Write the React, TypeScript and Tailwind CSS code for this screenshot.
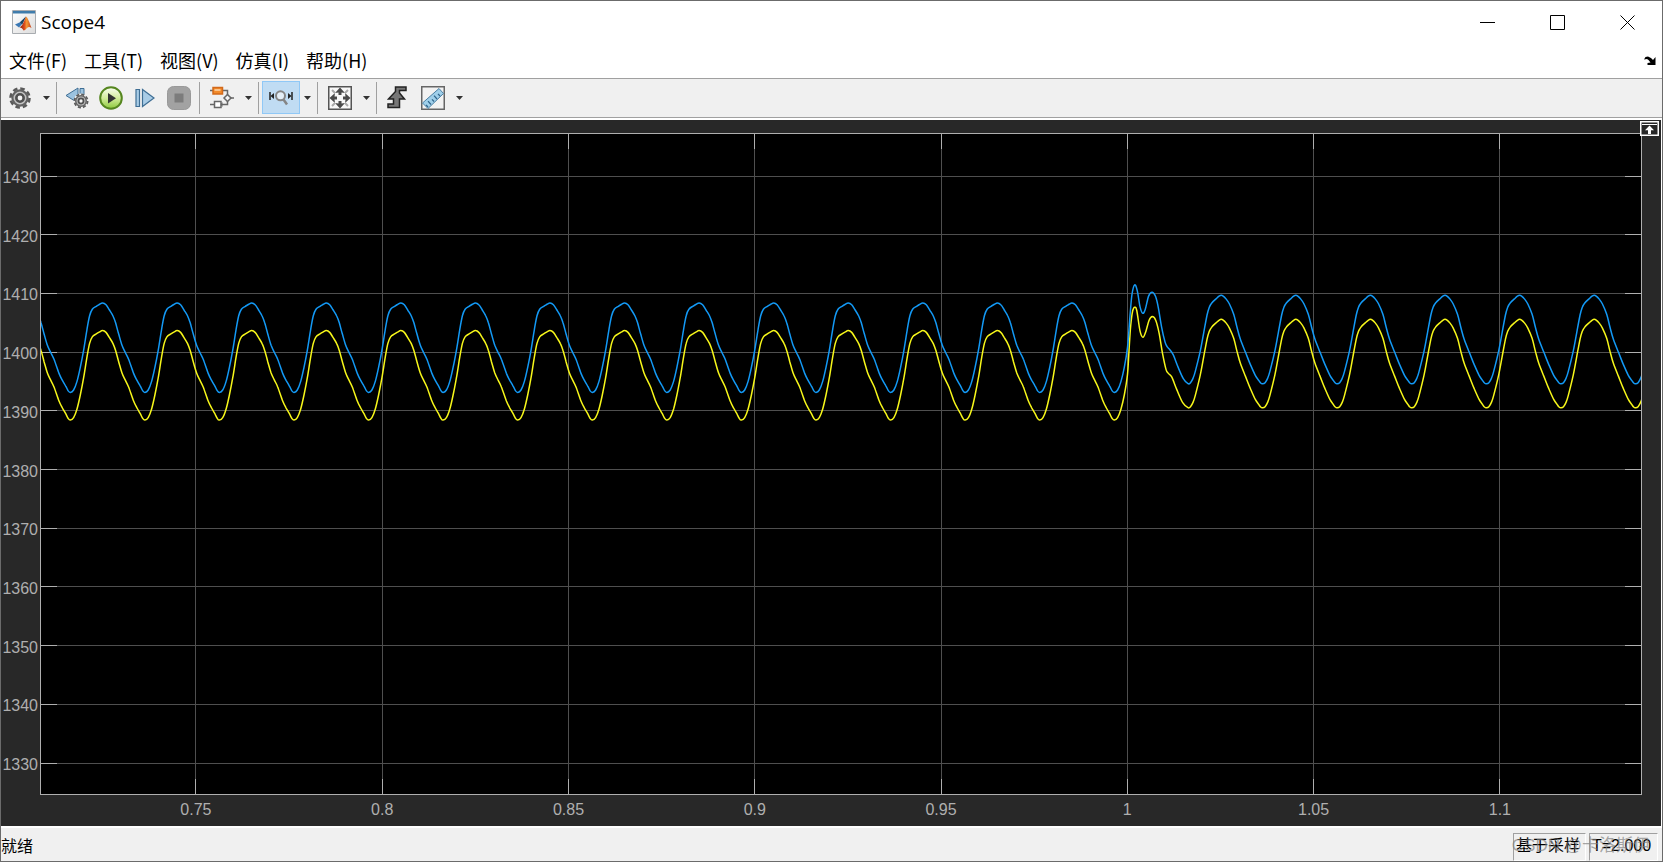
import React from 'react';

type Point = [number, number];

const VIEW_W = 1600;
const VIEW_H = 659;

const X_RANGE = { min: 0.70842, max: 1.13788 };
const Y_RANGE = { min: 1324.72, max: 1437.16 };

const xTicks = [0.75, 0.8, 0.85, 0.9, 0.95, 1, 1.05, 1.1];
const yTicks = [1430, 1420, 1410, 1400, 1390, 1380, 1370, 1360, 1350, 1340, 1330];

const menus = ['文件(F)', '工具(T)', '视图(V)', '仿真(I)', '帮助(H)'];

// One ripple period before the load step, starting at the trough
const rippleBefore: Point[] = [
  [0, 258], [3.3, 255.6], [6.7, 247], [10, 233], [13.3, 216], [16.7, 195], [19.3, 181.5], [22, 175],
  [26, 172], [29.3, 170], [32.3, 168.7], [35.7, 170.5], [39, 175.5], [42.7, 181.7], [45.3, 188.5],
  [48.3, 199.5], [51.7, 211], [55, 218.2], [58.3, 225], [63.3, 239], [66.7, 246], [70, 251.7], [72.5, 256.5],
];

// Same period after the load step
const rippleAfter: Point[] = [
  [0, 249.3], [2.5, 248.3], [5, 244], [7.3, 237], [12.3, 216.5], [15.7, 198.5], [19, 181], [21.3, 173], [24, 168.5],
  [28, 164.6], [31, 162], [33.2, 161], [35.2, 161.8], [38, 164.6], [41.3, 169.5], [45.7, 180], [49, 193],
  [52.3, 204.7], [57.3, 217.5], [62.3, 230], [67.3, 241], [70.7, 246], [72.7, 248.6],
];

const blueStep: Point[] = [
  [1086.5, 213], [1089, 181.5], [1091, 160], [1093.7, 150.6], [1096.3, 156.6], [1099, 172.3], [1101.7, 179],
  [1104.3, 175], [1107.7, 161.6], [1111.3, 158], [1114.7, 162.6], [1117.3, 173.3], [1120.7, 193.3],
  [1124, 207.6], [1126.3, 212.6], [1129, 215.6], [1132.3, 220.6], [1137.3, 233.3], [1142.3, 244.3],
];

const yellowStep: Point[] = [
  [1086.5, 240], [1087.7, 221.5], [1089.7, 191.5], [1091.7, 176.5], [1093.7, 173], [1095.7, 176],
  [1099, 196.6], [1102, 203], [1105, 196.6], [1108, 186.3], [1111.3, 182.3], [1114.7, 186], [1118, 198.3],
  [1121.7, 220], [1125, 235], [1127.3, 239], [1130.7, 242.6], [1135.7, 255], [1141.7, 268.3],
];

function buildTrace(before: number, step: Point[], after: number): Point[] {
  const points: Point[] = [];
  for (let i = -1; i < 15; i++) {
    rippleBefore.forEach(([x, y]) => points.push([29.3 + i * 74.57 + x, y + before]));
  }
  const head = points.filter(([x]) => x < 1084);
  const tail: Point[] = [];
  for (let i = 0; i < 7; i++) {
    rippleAfter.forEach(([x, y]) => tail.push([1147 + i * 74.6 + x, y + after]));
  }
  return [...head, ...step, ...tail];
}

function smoothPath(points: Point[]) {
  let d = `M${points[0][0]} ${points[0][1]}`;
  for (let i = 0; i < points.length - 1; i++) {
    const p0 = points[i - 1] ?? points[i];
    const p1 = points[i];
    const p2 = points[i + 1];
    const p3 = points[i + 2] ?? p2;
    const c1 = [p1[0] + (p2[0] - p0[0]) / 6, p1[1] + (p2[1] - p0[1]) / 6];
    const c2 = [p2[0] - (p3[0] - p1[0]) / 6, p2[1] - (p3[1] - p1[1]) / 6];
    d += `C${c1[0].toFixed(1)} ${c1[1].toFixed(1)} ${c2[0].toFixed(1)} ${c2[1].toFixed(1)} ${p2[0].toFixed(1)} ${p2[1].toFixed(1)}`;
  }
  return d;
}

const traces = [
  { color: '#f7f71a', d: smoothPath(buildTrace(27.6, yellowStep, 24)) },
  { color: '#1399f5', d: smoothPath(buildTrace(0, blueStep, 0)) },
];

const xPos = (v: number) => `${(((v - X_RANGE.min) / (X_RANGE.max - X_RANGE.min)) * 100).toFixed(3)}%`;
const yPos = (v: number) => `${(((Y_RANGE.max - v) / (Y_RANGE.max - Y_RANGE.min)) * 100).toFixed(3)}%`;

export default function App() {
  return (
    <div className="flex h-screen flex-col border border-[#6b6b6b] bg-[#f0f0f0] font-['Noto_Sans','Noto_Sans_CJK_SC',sans-serif] text-black">
      <TitleBar />
      <MenuBar />
      <Toolbar />
      <ScopePlot />
      <StatusBar />
    </div>
  );
}

function TitleBar() {
  return (
    <header className="flex h-[42px] shrink-0 items-center justify-between bg-white pl-[11px]">
      <div className="flex items-center gap-[5px]">
        <MatlabIcon />
        <h1 className="font-['Open_Sans','Noto_Sans',sans-serif] text-[19px] leading-6">Scope4</h1>
      </div>
      <div className="flex h-full">
        <WindowButton label="Minimize"><path d="M0 7.5h15" /></WindowButton>
        <WindowButton label="Maximize"><path d="M.5.5h14v14H.5z" /></WindowButton>
        <WindowButton label="Close"><path d="M.5.5l14 14M14.5.5l-14 14" /></WindowButton>
      </div>
    </header>
  );
}

function WindowButton({ label, children }: { label: string; children: React.ReactNode }) {
  return (
    <button aria-label={label} className="flex w-[70px] items-center justify-center">
      <svg width="15" height="15" viewBox="0 0 15 15" fill="none" stroke="#000">{children}</svg>
    </button>
  );
}

function MenuBar() {
  return (
    <nav className="flex h-[35px] shrink-0 items-center justify-between bg-white pr-[6px] pb-px pl-2">
      <div className="flex gap-[17px]">
        {menus.map((menu) => (
          <button key={menu} className="font-['Noto_Sans_CJK_SC',sans-serif] text-[18px] leading-6">{menu}</button>
        ))}
      </div>
      <button aria-label="Dock">
        <svg width="12" height="9" viewBox="0 0 12 9">
          <path d="M0 3.500L1.500 1 4 .5l3 1.500 2 2L11.500 1v8H3.500V7l3-.500L4.500 4 3 3z" fill="#000" />
        </svg>
      </button>
    </nav>
  );
}

function Toolbar() {
  return (
    <div className="flex h-10 shrink-0 items-center border-t border-b border-[#a0a0a0] bg-[#f0f0f0] pb-px">
      <ToolButton label="Configuration"><GearIcon /></ToolButton>
      <DropArrow label="Configuration options" />
      <Separator />
      <ToolButton label="Step back" narrow><StepBackIcon /></ToolButton>
      <ToolButton label="Run" narrow><RunIcon /></ToolButton>
      <ToolButton label="Step forward" narrow><StepForwardIcon /></ToolButton>
      <ToolButton label="Stop" narrow><StopIcon /></ToolButton>
      <Separator />
      <ToolButton label="Highlight block"><BlocksIcon /></ToolButton>
      <DropArrow label="Highlight options" />
      <Separator />
      <ToolButton label="Zoom X" active><ZoomXIcon /></ToolButton>
      <DropArrow label="Zoom options" />
      <Separator />
      <ToolButton label="Scale axes"><FitIcon /></ToolButton>
      <DropArrow label="Scale options" />
      <Separator />
      <ToolButton label="Triggers" narrow><TriggerIcon /></ToolButton>
      <ToolButton label="Measurements"><RulerIcon /></ToolButton>
      <DropArrow label="Measurement options" />
    </div>
  );
}

interface ToolButtonProps {
  label: string;
  narrow?: boolean;
  active?: boolean;
  children: React.ReactNode;
}

function ToolButton({ label, narrow, active, children }: ToolButtonProps) {
  return (
    <button
      aria-label={label}
      className={`flex h-[33px] items-center justify-center border ${narrow ? 'w-[34px]' : 'w-[38px]'} ${active ? 'border-[#90c8f6] bg-[#c0dcf3]' : 'border-transparent'}`}
    >
      {children}
    </button>
  );
}

function DropArrow({ label }: { label: string }) {
  return (
    <button aria-label={label} className="flex h-8 w-[14px] items-center justify-center">
      <svg width="7" height="4" viewBox="0 0 7 4"><path d="M0 0h7L3.500 4z" fill="#333" /></svg>
    </button>
  );
}

function Separator() {
  return <div className="mx-[3px] h-8 w-px bg-[#a0a0a0]" />;
}

function ScopePlot() {
  return (
    <main className="relative flex min-h-0 flex-1 border-t-2 border-r border-white bg-[#282828] pt-[13px] pr-[19px] pb-[31px] pl-[39px]">
      <div className="min-w-0 flex-1 border border-[#afafaf] bg-black">
        <svg className="block h-full w-full overflow-visible font-['Liberation_Sans',sans-serif] text-[16px]">
          <g stroke="#4f4f4f" shapeRendering="crispEdges">
            {xTicks.map((x) => <line key={x} x1={xPos(x)} x2={xPos(x)} y1="0" y2="100%" />)}
            {yTicks.map((y) => <line key={y} x1="0" x2="100%" y1={yPos(y)} y2={yPos(y)} />)}
          </g>
          <g stroke="#afafaf" shapeRendering="crispEdges">
            {xTicks.map((x) => <line key={x} x1={xPos(x)} x2={xPos(x)} y1="0" y2="15" />)}
            {yTicks.map((y) => <line key={y} x1="0" x2="16" y1={yPos(y)} y2={yPos(y)} />)}
            <svg y="100%" overflow="visible">
              {xTicks.map((x) => <line key={x} x1={xPos(x)} x2={xPos(x)} y1="-15" y2="0" />)}
            </svg>
            <svg x="100%" overflow="visible">
              {yTicks.map((y) => <line key={y} x1="-16" x2="0" y1={yPos(y)} y2={yPos(y)} />)}
            </svg>
          </g>
          <g fill="#afafaf">
            {yTicks.map((y) => <text key={y} x="-3" y={yPos(y)} dy="7" textAnchor="end">{y}</text>)}
            <svg y="100%" overflow="visible">
              {xTicks.map((x) => <text key={x} x={xPos(x)} y="21" textAnchor="middle">{x}</text>)}
            </svg>
          </g>
          <svg width="100%" height="100%" viewBox={`0 0 ${VIEW_W} ${VIEW_H}`} preserveAspectRatio="none" overflow="hidden">
            {traces.map((t) => (
              <path key={t.color} d={t.d} fill="none" stroke={t.color} strokeWidth="1.5" strokeLinejoin="round" vectorEffect="non-scaling-stroke" />
            ))}
          </svg>
        </svg>
      </div>
      <button aria-label="Maximize axes" className="absolute top-px right-0.5">
        <svg width="19" height="15" viewBox="0 0 19 15">
          <path d="M.75.75h17.500v13.500H.75z" fill="#282828" stroke="#fff" strokeWidth="1.500" />
          <path d="M2 3.500h15" stroke="#fff" />
          <path d="M9.500 4.500L14 9.200h-3V13H8V9.200H5z" fill="#fff" />
        </svg>
      </button>
    </main>
  );
}

function StatusBar() {
  return (
    <footer className="relative flex h-[35px] shrink-0 items-center justify-between border-t-2 border-white pt-1 pr-1 font-['Liberation_Sans','Noto_Sans_CJK_SC',sans-serif] text-[16px] leading-6">
      <span>就绪</span>
      <div className="flex gap-[3px]">
        <span className="h-7 w-[73px] border border-t-[#a0a0a0] border-r-white border-b-white border-l-[#a0a0a0] pl-0.5">基于采样</span>
        <span className="h-7 w-[69px] border border-t-[#a0a0a0] border-r-white border-b-white border-l-[#a0a0a0] pl-0.5">T=2.000</span>
      </div>
      <span className="pointer-events-none absolute top-1.5 right-3 text-[17px] whitespace-nowrap text-[#808080]/70">CSDN @卡洛斯伊</span>
    </footer>
  );
}

function MatlabIcon() {
  return (
    <svg width="24" height="24" viewBox="0 0 24 24">
      <defs>
        <linearGradient id="frame" x1="0" y1="0" x2="1" y2="1">
          <stop offset="0" stopColor="#fff" />
          <stop offset="1" stopColor="#dcdcdc" />
        </linearGradient>
        <linearGradient id="peak" x1="0" y1="0" x2="1" y2="0">
          <stop offset="0" stopColor="#7a1f10" />
          <stop offset=".4" stopColor="#d9481c" />
          <stop offset=".6" stopColor="#f59a35" />
          <stop offset="1" stopColor="#c23a17" />
        </linearGradient>
      </defs>
      <path d="M.5.5h23v23H.5z" fill="url(#frame)" stroke="#a8acb0" />
      <path d="M1 1h22v2.500H1z" fill="#3f7cab" />
      <path d="M3 14.500l5-2.200 3.200-3L14 6.500l-3.500 7L7 17.500z" fill="#3b78b4" />
      <path d="M8 12.300l3.200-3L14 6.500l-3.800 8z" fill="#1d4560" />
      <path d="M14 6.500c1.500.5 3.500 6 5.500 11.500-2-1.500-3-1.500-4.500 0-1.300 1.200-2 2.500-3.500 2.500-1-1.500-2-3-4-3.200 3-1 4.500-6 6.500-10.800z" fill="url(#peak)" />
    </svg>
  );
}

function Cog({ cx, cy, r }: { cx: number; cy: number; r: number }) {
  return (
    <g>
      <circle cx={cx} cy={cy} r={r * 0.88} fill="none" stroke="#5a5a5a" strokeWidth={r * 0.24} strokeDasharray={`${r * 0.42} ${r * 0.271}`} />
      <circle cx={cx} cy={cy} r={r * 0.7} fill="#c4c4c4" stroke="#636363" strokeWidth={r * 0.2} />
      <circle cx={cx} cy={cy} r={r * 0.34} fill="#f4f4f4" stroke="#505050" strokeWidth={r * 0.24} />
    </g>
  );
}

function GearIcon() {
  return (
    <svg width="22" height="22" viewBox="0 0 22 22"><Cog cx={11} cy={11} r={10.8} /></svg>
  );
}

function StepBackIcon() {
  return (
    <svg width="24" height="24" viewBox="0 0 24 24">
      <path d="M1 9.500L13 2v15z" fill="#9cc3e0" stroke="#3f6e94" />
      <path d="M15 2.500h4v13h-4z" fill="#9cc3e0" stroke="#3f6e94" />
      <circle cx="16" cy="15" r="7.500" fill="#f0f0f0" />
      <Cog cx={16} cy={15} r={7.5} />
    </svg>
  );
}

function RunIcon() {
  return (
    <svg width="24" height="24" viewBox="0 0 24 24">
      <defs>
        <linearGradient id="run" x1="0" y1="0" x2="0" y2="1">
          <stop offset="0" stopColor="#fbfef4" />
          <stop offset=".5" stopColor="#d3ec9c" />
          <stop offset="1" stopColor="#8cc83c" />
        </linearGradient>
      </defs>
      <circle cx="12" cy="12" r="10.800" fill="url(#run)" stroke="#55861f" strokeWidth="2" />
      <path d="M9 7v10.500l8-5.300z" fill="#333" />
    </svg>
  );
}

function StepForwardIcon() {
  return (
    <svg width="20" height="20" viewBox="0 0 20 20" fill="#a9cce6" stroke="#3f6e94" strokeWidth="1.200">
      <path d="M1 1.500h3.500v17H1z" />
      <path d="M7.500 1.500v17l11.500-8.500z" />
    </svg>
  );
}

function StopIcon() {
  return (
    <svg width="24" height="24" viewBox="0 0 24 24">
      <rect x=".5" y=".5" width="23" height="23" rx="6" fill="#a2a2a2" stroke="#999" />
      <path d="M7.500 7.500h9v9h-9z" fill="#7c7c7c" />
    </svg>
  );
}

function BlocksIcon() {
  return (
    <svg width="24" height="23" viewBox="0 0 24 23" fill="none" stroke="#666" strokeWidth="1.500">
      <path d="M0 4.500h3M12.500 4.500h5v4.500M21 12h3M17.500 15v3.500h-7M0 18.500h4" />
      <path d="M3 1.500h9.500V8H3z" fill="#f28a2a" stroke="#d2691a" />
      <path d="M4.500 3h6v2h-6z" fill="#fbc48b" stroke="none" />
      <path d="M4.500 15.500h6.500v6H4.500z" fill="#fff" />
      <path d="M17.500 8.500L21 12l-3.500 3.500L14 12z" fill="#f4f4f4" />
      <path d="M12.500 16v5l-2-2.500z" fill="#666" stroke="none" />
    </svg>
  );
}

function ZoomXIcon() {
  return (
    <svg width="24" height="16" viewBox="0 0 24 16">
      <path d="M1 2v8M23 2v8" stroke="#222" strokeWidth="1.500" />
      <path d="M1.500 6l3.500-3v6zM22.500 6L19 3v6z" fill="#222" />
      <circle cx="11.500" cy="5.800" r="4.500" fill="#e4eef6" stroke="#858585" strokeWidth="2" />
      <path d="M14.500 9.500l3.500 5" stroke="#858585" strokeWidth="2.500" />
    </svg>
  );
}

function FitIcon() {
  return (
    <svg width="24" height="24" viewBox="0 0 24 24">
      <path d="M.75.75h22.500v22.500H.75z" fill="#f8f8f8" stroke="#555" strokeWidth="1.500" />
      <path d="M12 1.500l5 5.500-3.500-.5v2.500h-3V6.500L7 7zM12 22.500l5-5.500-3.500.5v-2.500h-3v2.500L7 17zM1.500 12L7 7l-.5 3.500H9v3H6.500L7 17zM22.500 12L17 7l.5 3.500H15v3h2.500L17 17z" fill="#4a4a4a" />
      <path d="M4 4l3 3M20 4l-3 3M4 20l3-3M20 20l-3-3" stroke="#aaa" strokeWidth="2" />
    </svg>
  );
}

function TriggerIcon() {
  return (
    <svg width="20" height="23" viewBox="0 0 20 23">
      <path d="M1 18h5.500v-5H1.500l7-7.500V1H19v3.500h-6.500V7l5 6h-5v8.500H1z" fill="#777" stroke="#222" strokeWidth="1.500" />
    </svg>
  );
}

function RulerIcon() {
  return (
    <svg width="24" height="24" viewBox="0 0 24 24">
      <path d="M.75.75h22.500v22.500H.75z" fill="#f2f2f2" stroke="#666" strokeWidth="1.500" />
      <path d="M1.500 17L18 2.500l4.500 5L7 22.500z" fill="#9fcfea" stroke="#4b7fa3" />
      <path d="M7 21l-2-2.200M10 18.500l-3-3.300M13 15.500l-2-2.200M16 13l-3-3.300M19 10l-2-2.200" stroke="#2f648a" strokeWidth="1.200" />
    </svg>
  );
}
